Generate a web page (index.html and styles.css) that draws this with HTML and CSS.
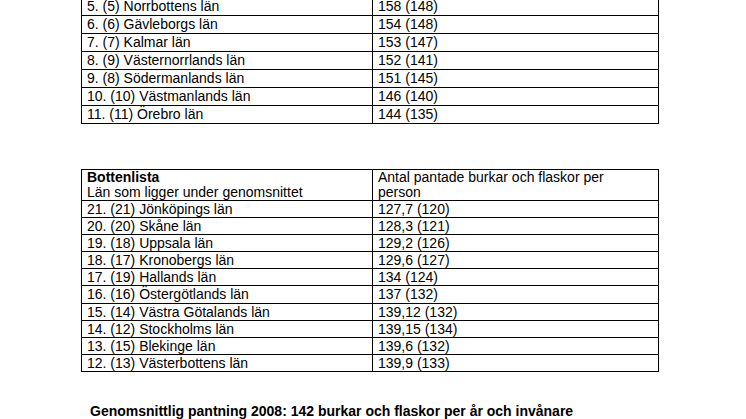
FILE: index.html
```html
<!DOCTYPE html>
<html lang="sv">
<head>
<meta charset="utf-8">
<title>Pantning per län</title>
<link rel="stylesheet" href="styles.css">
</head>
<body>
<div class="page">
  <table class="lan-table top-cut">
    <colgroup><col class="c1"><col class="c2"></colgroup>
    <tbody>
      <tr><td>5. (5) Norrbottens län</td><td>158 (148)</td></tr>
      <tr><td>6. (6) Gävleborgs län</td><td>154 (148)</td></tr>
      <tr><td>7. (7) Kalmar län</td><td>153 (147)</td></tr>
      <tr><td>8. (9) Västernorrlands län</td><td>152 (141)</td></tr>
      <tr><td>9. (8) Södermanlands län</td><td>151 (145)</td></tr>
      <tr><td>10. (10) Västmanlands län</td><td>146 (140)</td></tr>
      <tr><td>11. (11) Örebro län</td><td>144 (135)</td></tr>
    </tbody>
  </table>

  <table class="lan-table second">
    <colgroup><col class="c1"><col class="c2"></colgroup>
    <tbody>
      <tr class="head"><td><b>Bottenlista</b><br>Län som ligger under genomsnittet</td><td class="wrap">Antal pantade burkar och flaskor per person</td></tr>
      <tr><td>21. (21) Jönköpings län</td><td>127,7 (120)</td></tr>
      <tr><td>20. (20) Skåne län</td><td>128,3 (121)</td></tr>
      <tr><td>19. (18) Uppsala län</td><td>129,2 (126)</td></tr>
      <tr><td>18. (17) Kronobergs län</td><td>129,6 (127)</td></tr>
      <tr><td>17. (19) Hallands län</td><td>134 (124)</td></tr>
      <tr><td>16. (16) Östergötlands län</td><td>137 (132)</td></tr>
      <tr><td>15. (14) Västra Götalands län</td><td>139,12 (132)</td></tr>
      <tr><td>14. (12) Stockholms län</td><td>139,15 (134)</td></tr>
      <tr><td>13. (15) Blekinge län</td><td>139,6 (132)</td></tr>
      <tr><td>12. (13) Västerbottens län</td><td>139,9 (133)</td></tr>
    </tbody>
  </table>

  <p class="summary">Genomsnittlig pantning 2008: 142 burkar och flaskor per år och invånare</p>
</div>
</body>
</html>
```
FILE: styles.css
```css
html, body {
  margin: 0;
  padding: 0;
  background: #ffffff;
}
body {
  font-family: "Liberation Sans", Arial, sans-serif;
  font-size: 14px;
  color: #000000;
  overflow: hidden;
}
.page {
  padding-left: 81px;
  width: 577px;
}
.lan-table {
  border-collapse: collapse;
  table-layout: fixed;
  width: 577px;
}
.lan-table .c1 { width: 291px; }
.lan-table .c2 { width: 286px; }
.lan-table td {
  border: 1px solid #000000;
  padding: 0 5px;
  line-height: 16.1px;
  vertical-align: top;
}
.lan-table .head td {
  line-height: 15px;
}
.lan-table td.wrap {
  padding-right: 12px;
}
.top-cut {
  margin-top: -3px;
}
.top-cut td {
  line-height: 17px;
}
.second {
  margin-top: 45px;
}
.summary {
  margin: 31px 0 0 9px;
  font-weight: bold;
  line-height: 16px;
}
```
